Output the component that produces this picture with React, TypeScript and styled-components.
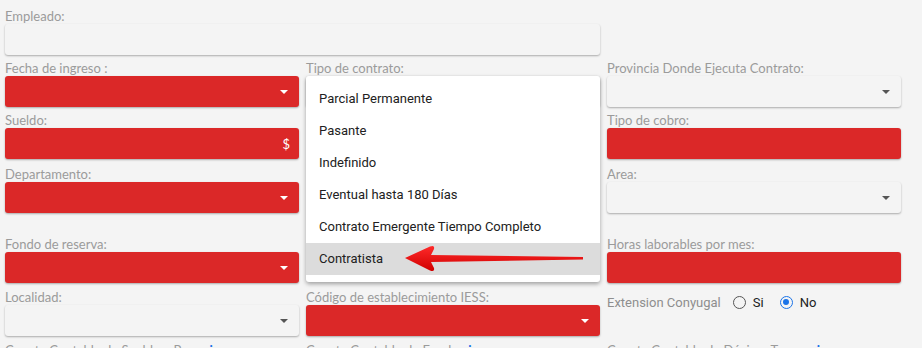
import React from "react";
import styled, { createGlobalStyle } from "styled-components";

const Global = createGlobalStyle`
  html, body { margin: 0; padding: 0; background: #f4f4f4; }
  body { width: 922px; height: 348px; overflow: hidden; font-family: Lato, "Open Sans", sans-serif; }
`;

const Form = styled.div`
  display: flex;
  flex-direction: column;
  padding: 8px 0 0 5px;
`;

const Row = styled.div<{ $top: number }>`
  display: grid;
  grid-template-columns: repeat(3, 294px);
  column-gap: 7px;
  margin-top: ${(p) => p.$top}px;
`;

const Field = styled.div<{ $span?: number }>`
  display: flex;
  flex-direction: column;
  grid-column: span ${(p) => p.$span ?? 1};
  position: relative;
`;

const Label = styled.div`
  height: 16px;
  line-height: 16px;
  font-size: 13px;
  color: #9b9b9b;
  font-family: Lato, sans-serif;
  white-space: nowrap;
`;

const Control = styled.div<{ $red?: boolean; $h?: number }>`
  position: relative;
  height: ${(p) => p.$h ?? 31}px;
  border-radius: 3px;
  background: ${(p) => (p.$red ? "#db2828" : "#f4f4f4")};
  box-shadow: 0 1px 2px rgba(0, 0, 0, 0.3);
  display: flex;
  align-items: center;
  justify-content: flex-end;
  padding-right: 11px;
  box-sizing: border-box;
`;

const Caret = styled.span<{ $light?: boolean }>`
  width: 0;
  height: 0;
  border-left: 4px solid transparent;
  border-right: 4px solid transparent;
  border-top: 4px solid ${(p) => (p.$light ? "#ffffff" : "#555555")};
  margin-top: 1px;
`;

const Dollar = styled.span`
  color: #ffffff;
  font-family: Lato, sans-serif;
  font-size: 13px;
  margin-right: -2px;
`;

const Menu = styled.div`
  position: absolute;
  top: 0;
  left: 0;
  right: 0;
  z-index: 10;
  background: #ffffff;
  border-radius: 3px;
  box-shadow: 0 2px 4px rgba(0, 0, 0, 0.35);
  padding: 7px 0;
`;

const MenuItem = styled.div<{ $active?: boolean }>`
  height: 32px;
  line-height: 32px;
  padding-left: 13px;
  font-family: Roboto, sans-serif;
  font-size: 13px;
  color: #212121;
  background: ${(p) => (p.$active ? "#dcdcdc" : "transparent")};
`;

const Arrow = styled.svg`
  position: absolute;
  left: 95px;
  top: 168px;
  z-index: 11;
`;

const Radios = styled.div`
  display: flex;
  align-items: center;
  height: 24px;
  margin-top: 1px;
  font-family: Roboto, sans-serif;
  font-size: 13px;
`;

const RadioLabel = styled.span`
  color: #8e8e8e;
  margin-right: 12px;
`;

const RadioOption = styled.span`
  display: inline-flex;
  align-items: center;
  color: #212121;
  margin-right: 16px;
`;

const Circle = styled.span<{ $on?: boolean }>`
  width: 13px;
  height: 13px;
  box-sizing: border-box;
  border-radius: 50%;
  border: 1.5px solid ${(p) => (p.$on ? "#1a73e8" : "#555")};
  display: inline-flex;
  align-items: center;
  justify-content: center;
  margin-right: 7px;
  &::after {
    content: "";
    width: 6px;
    height: 6px;
    border-radius: 50%;
    background: ${(p) => (p.$on ? "#1a73e8" : "transparent")};
  }
`;

const Info = styled.span`
  color: #1a73e8;
  margin-left: 4px;
  font-weight: bold;
`;

const options = [
  "Parcial Permanente",
  "Pasante",
  "Indefinido",
  "Eventual hasta 180 Días",
  "Contrato Emergente Tiempo Completo",
  "Contratista",
];

export default function App() {
  return (
    <>
      <Global />
      <Form>
        <Row $top={0}>
          <Field $span={2}>
            <Label>Empleado:</Label>
            <Control $h={31} />
          </Field>
        </Row>
        <Row $top={5}>
          <Field>
            <Label>Fecha de ingreso :</Label>
            <Control $red>
              <Caret $light />
            </Control>
          </Field>
          <Field>
            <Label>Tipo de contrato:</Label>
            <Control>
              <Menu>
                {options.map((o) => (
                  <MenuItem key={o} $active={o === "Contratista"}>
                    {o}
                  </MenuItem>
                ))}
                <Arrow width="186" height="30" viewBox="0 0 186 30">
                  <defs>
                    <linearGradient id="ag" x1="0" y1="0" x2="0" y2="1">
                      <stop offset="0" stopColor="#ff2a2a" />
                      <stop offset="1" stopColor="#d00000" />
                    </linearGradient>
                  </defs>
                  <path
                    d="M4 14 L29 2.5 Q34 0.5 33 5 L30 11 L182 13 L182 15.5 L30 18 L33 24 Q34 28.5 29 26.5 Z"
                    fill="url(#ag)"
                  />
                </Arrow>
              </Menu>
            </Control>
          </Field>
          <Field>
            <Label>Provincia Donde Ejecuta Contrato:</Label>
            <Control>
              <Caret />
            </Control>
          </Field>
        </Row>
        <Row $top={5}>
          <Field>
            <Label>Sueldo:</Label>
            <Control $red>
              <Dollar>$</Dollar>
            </Control>
          </Field>
          <Field />
          <Field>
            <Label>Tipo de cobro:</Label>
            <Control $red />
          </Field>
        </Row>
        <Row $top={7}>
          <Field>
            <Label>Departamento:</Label>
            <Control $red>
              <Caret $light />
            </Control>
          </Field>
          <Field />
          <Field>
            <Label>Area:</Label>
            <Control>
              <Caret />
            </Control>
          </Field>
        </Row>
        <Row $top={23}>
          <Field>
            <Label>Fondo de reserva:</Label>
            <Control $red>
              <Caret $light />
            </Control>
          </Field>
          <Field />
          <Field>
            <Label>Horas laborables por mes:</Label>
            <Control $red />
          </Field>
        </Row>
        <Row $top={6}>
          <Field>
            <Label>Localidad:</Label>
            <Control>
              <Caret />
            </Control>
          </Field>
          <Field>
            <Label>Código de establecimiento IESS:</Label>
            <Control $red>
              <Caret $light />
            </Control>
          </Field>
          <Field>
            <Radios>
              <RadioLabel>Extension Conyugal</RadioLabel>
              <RadioOption>
                <Circle />
                Si
              </RadioOption>
              <RadioOption>
                <Circle $on />
                No
              </RadioOption>
            </Radios>
          </Field>
        </Row>
        <Row $top={6}>
          <Field>
            <Label>
              Cuenta Contable de Sueldo a Pagar<Info>i</Info>
            </Label>
          </Field>
          <Field>
            <Label>
              Cuenta Contable de Fondos<Info>i</Info>
            </Label>
          </Field>
          <Field>
            <Label>
              Cuenta Contable de Décimo Tercero<Info>i</Info>
            </Label>
          </Field>
        </Row>
      </Form>
    </>
  );
}
